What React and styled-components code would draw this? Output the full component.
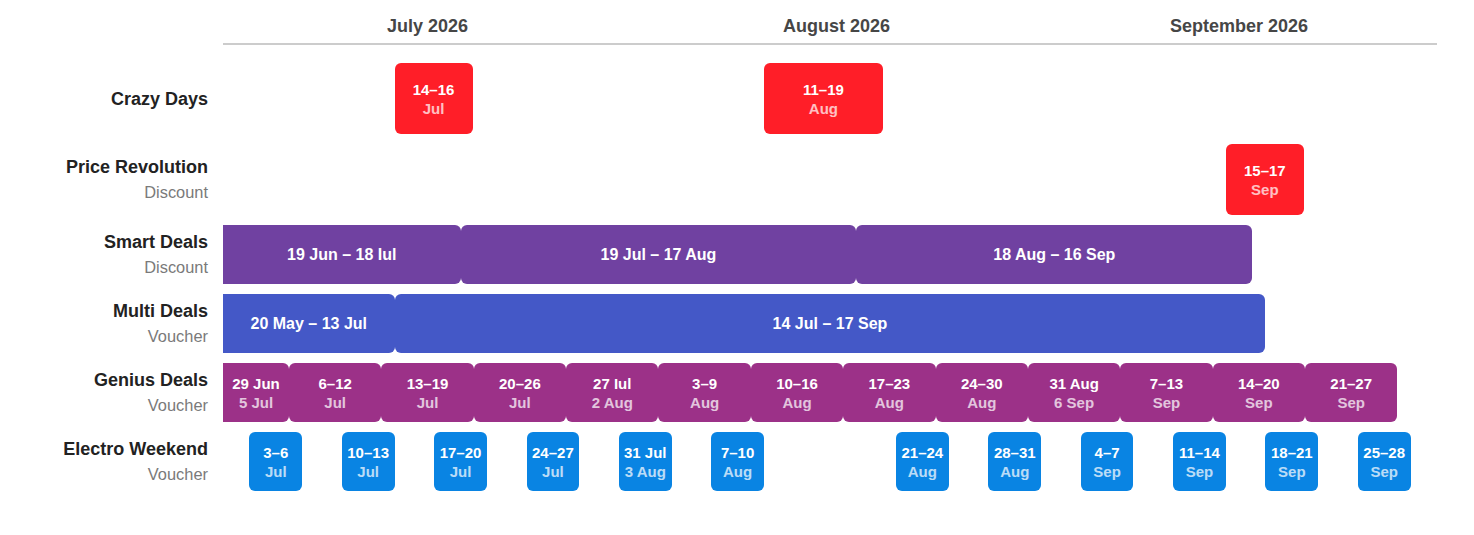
import React from 'react';
import styled, { createGlobalStyle } from 'styled-components';

const GlobalStyle = createGlobalStyle`
  body {
    margin: 0;
    background: #fff;
    font-family: "Liberation Sans", Arial, sans-serif;
  }
`;

const TOTAL_DAYS = 92;
const ORIGIN = Date.UTC(2026, 6, 1);

const dayOf = (m, d) => Math.round((Date.UTC(2026, m - 1, d) - ORIGIN) / 86400000);

const COLORS = {
  red: '#ff1e28',
  purple: '#7041a1',
  indigo: '#4458c7',
  magenta: '#9c3188',
  blue: '#0984e3',
};

const Chart = styled.div`
  display: grid;
  grid-template-columns: 208px 1214px;
  column-gap: 15px;
  row-gap: 10px;
  padding-top: 16px;
`;

const MonthHeader = styled.div`
  grid-column: 2;
  display: grid;
  grid-template-columns: 31fr 31fr 30fr;
  border-bottom: 2px solid #cccccc;
  padding-bottom: 6px;
  margin-bottom: 8px;
`;

const Month = styled.div`
  text-align: center;
  font-size: 18px;
  line-height: 21px;
  font-weight: 700;
  color: #464646;
`;

const Label = styled.div`
  grid-column: 1;
  display: flex;
  flex-direction: column;
  justify-content: center;
  align-items: flex-end;
  text-align: right;
  padding-top: 1px;
`;

const Name = styled.div`
  font-size: 18px;
  line-height: 25px;
  font-weight: 700;
  color: #222;
  white-space: nowrap;
`;

const Kind = styled.div`
  font-size: 16.4px;
  line-height: 25px;
  color: #7a7a7a;
`;

const Track = styled.div`
  grid-column: 2;
  position: relative;
  height: ${({ $height }) => $height}px;
`;

const Bar = styled.div`
  position: absolute;
  top: 0;
  bottom: 0;
  box-sizing: border-box;
  min-width: ${({ $min }) => $min || 0}px;
  display: flex;
  flex-direction: column;
  align-items: center;
  justify-content: center;
  background: ${({ $color }) => COLORS[$color]};
  border-radius: 6px;
  ${({ $clipped }) => $clipped && 'border-top-left-radius: 0; border-bottom-left-radius: 0;'}
  color: #fff;
  font-weight: 700;
  text-align: center;
  white-space: nowrap;
`;

const Wide = styled.span`
  font-size: 16px;
  line-height: 20px;
`;

const Top = styled.span`
  font-size: 15px;
  line-height: 19px;
`;

const Bottom = styled.span`
  font-size: 15px;
  line-height: 19px;
  opacity: 0.72;
`;

// [start month, start day, end month, end day, line 1, line 2]
const lanes = [
  {
    name: 'Crazy Days', color: 'red', height: 71, min: 78,
    items: [
      [7, 14, 7, 16, '14–16', 'Jul'],
      [8, 11, 8, 19, '11–19', 'Aug'],
    ],
  },
  {
    name: 'Price Revolution', kind: 'Discount', color: 'red', height: 71, min: 78,
    items: [[9, 15, 9, 17, '15–17', 'Sep']],
  },
  {
    name: 'Smart Deals', kind: 'Discount', color: 'purple', height: 59,
    items: [
      [6, 19, 7, 18, '19 Jun – 18 Iul'],
      [7, 19, 8, 17, '19 Jul – 17 Aug'],
      [8, 18, 9, 16, '18 Aug – 16 Sep'],
    ],
  },
  {
    name: 'Multi Deals', kind: 'Voucher', color: 'indigo', height: 59,
    items: [
      [5, 20, 7, 13, '20 May – 13 Jul'],
      [7, 14, 9, 17, '14 Jul – 17 Sep'],
    ],
  },
  {
    name: 'Genius Deals', kind: 'Voucher', color: 'magenta', height: 59,
    items: [
      [6, 29, 7, 5, '29 Jun', '5 Jul'],
      [7, 6, 7, 12, '6–12', 'Jul'],
      [7, 13, 7, 19, '13–19', 'Jul'],
      [7, 20, 7, 26, '20–26', 'Jul'],
      [7, 27, 8, 2, '27 Iul', '2 Aug'],
      [8, 3, 8, 9, '3–9', 'Aug'],
      [8, 10, 8, 16, '10–16', 'Aug'],
      [8, 17, 8, 23, '17–23', 'Aug'],
      [8, 24, 8, 30, '24–30', 'Aug'],
      [8, 31, 9, 6, '31 Aug', '6 Sep'],
      [9, 7, 9, 13, '7–13', 'Sep'],
      [9, 14, 9, 20, '14–20', 'Sep'],
      [9, 21, 9, 27, '21–27', 'Sep'],
    ],
  },
  {
    name: 'Electro Weekend', kind: 'Voucher', color: 'blue', height: 59,
    items: [
      [7, 3, 7, 6, '3–6', 'Jul'],
      [7, 10, 7, 13, '10–13', 'Jul'],
      [7, 17, 7, 20, '17–20', 'Jul'],
      [7, 24, 7, 27, '24–27', 'Jul'],
      [7, 31, 8, 3, '31 Jul', '3 Aug'],
      [8, 7, 8, 10, '7–10', 'Aug'],
      [8, 21, 8, 24, '21–24', 'Aug'],
      [8, 28, 8, 31, '28–31', 'Aug'],
      [9, 4, 9, 7, '4–7', 'Sep'],
      [9, 11, 9, 14, '11–14', 'Sep'],
      [9, 18, 9, 21, '18–21', 'Sep'],
      [9, 25, 9, 28, '25–28', 'Sep'],
    ],
  },
];

const pct = (days) => `${(days / TOTAL_DAYS) * 100}%`;

const LaneBar = ({ item, color, min }) => {
  const [sm, sd, em, ed, first, second] = item;
  const rawStart = dayOf(sm, sd);
  const start = Math.max(0, rawStart);
  const end = Math.min(TOTAL_DAYS, dayOf(em, ed) + 1);

  return (
    <Bar
      $color={color}
      $min={min}
      $clipped={rawStart < 0}
      style={{ left: pct(start), width: pct(end - start) }}
    >
      {second ? (
        <>
          <Top>{first}</Top>
          <Bottom>{second}</Bottom>
        </>
      ) : (
        <Wide>{first}</Wide>
      )}
    </Bar>
  );
};

export default function App() {
  return (
    <>
      <GlobalStyle />
      <Chart>
        <MonthHeader>
          <Month>July 2026</Month>
          <Month>August 2026</Month>
          <Month>September 2026</Month>
        </MonthHeader>
        {lanes.map((lane) => (
          <React.Fragment key={lane.name}>
            <Label>
              <Name>{lane.name}</Name>
              {lane.kind && <Kind>{lane.kind}</Kind>}
            </Label>
            <Track $height={lane.height}>
              {lane.items.map((item) => (
                <LaneBar key={item[4]} item={item} color={lane.color} min={lane.min} />
              ))}
            </Track>
          </React.Fragment>
        ))}
      </Chart>
    </>
  );
}
